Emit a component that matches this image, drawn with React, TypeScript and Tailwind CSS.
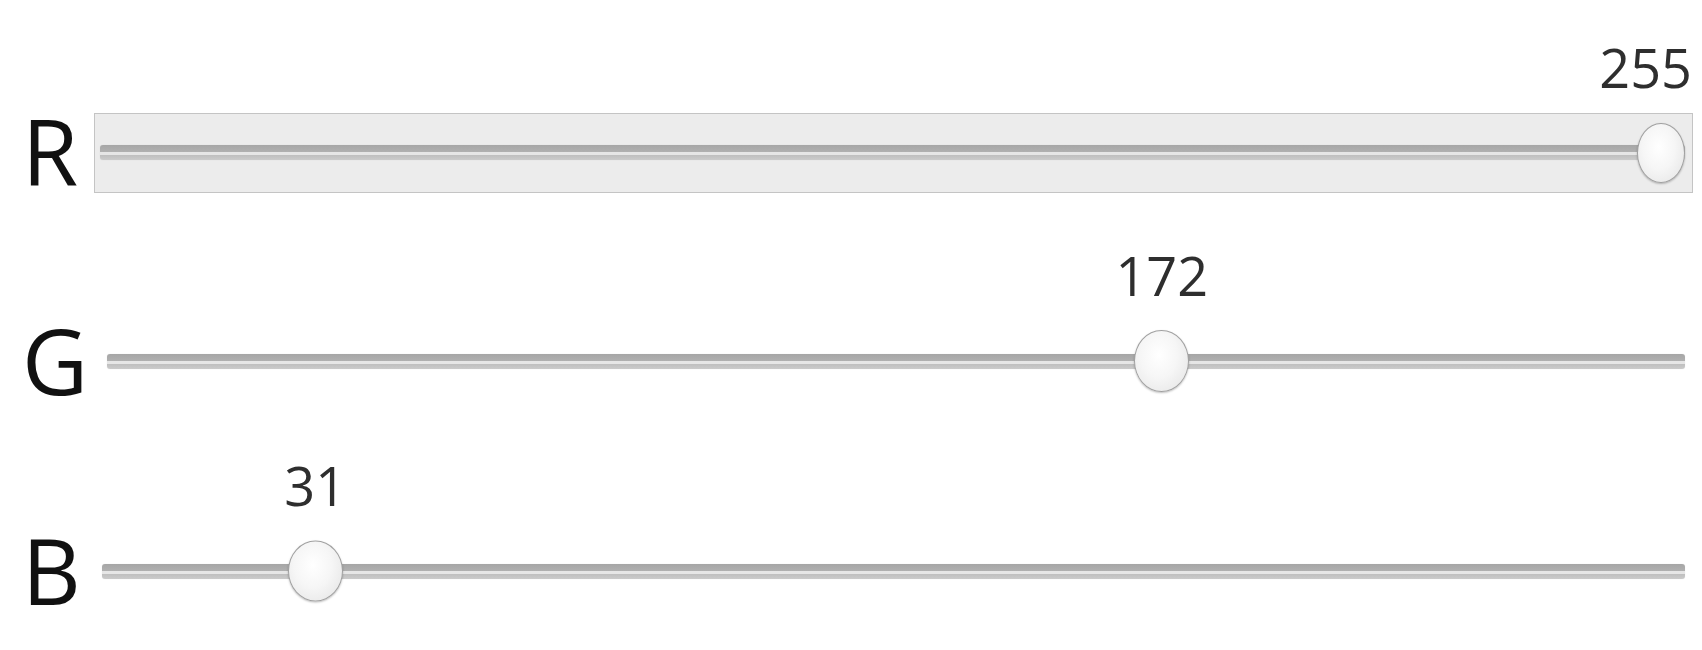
import React from "react";

type SliderProps = {
  value: number;
  thumbW: number;
  thumbClass: string;
  labelClass: string;
};

function Slider({ value, thumbW, thumbClass, labelClass }: SliderProps) {
  return (
    <div className="relative h-[15px] w-full rounded-[3px] bg-[linear-gradient(to_bottom,#a6a6a6_0%,#b0b0b0_45%,#e6e6e6_50%,#e6e6e6_64%,#c0c0c0_70%,#cbcbcb_100%)] shadow-[0_0_1px_rgba(0,0,0,0.15)]">
      <div
        className="absolute top-1/2 h-0"
        style={{ left: `calc((100% - ${thumbW}px) * ${value / 255})`, width: thumbW }}
      >
        <div
          className={`absolute left-0 top-0 -translate-y-1/2 rounded-[50%] border-[1.5px] border-[#a0a0a0] bg-[radial-gradient(ellipse_at_45%_40%,#ffffff_0%,#f6f6f6_45%,#e2e2e2_100%)] shadow-[0_1px_2px_rgba(0,0,0,0.25)] ${thumbClass}`}
        />
        <div
          className={`absolute bottom-[59px] whitespace-nowrap text-[54px] leading-none text-[#2e2e2e] ${labelClass}`}
        >
          {value}
        </div>
      </div>
    </div>
  );
}

function Letter({ children }: { children: React.ReactNode }) {
  return (
    <div className="mb-[2px] w-[94px] shrink-0 pl-[22px] text-[91px] leading-none text-[#111]">
      {children}
    </div>
  );
}

export default function App() {
  return (
    <div
      className="h-[650px] w-[1702px] overflow-hidden bg-white pt-[91px]"
      style={{ fontFamily: '"Open Sans", "Liberation Sans", sans-serif' }}
    >
      <div className="flex flex-col gap-[90px]">
        {/* R */}
        <div className="flex h-[120px] items-center">
          <Letter>R</Letter>
          <div className="mt-[4px] h-[80px] w-[1599px] border border-[#c4c4c4] bg-[#ececec] pl-[5px] pr-[7px] pt-[31px]">
            <Slider
              value={255}
              thumbW={48}
              thumbClass="w-[48px] h-[60px]"
              labelClass="right-[-7px]"
            />
          </div>
        </div>
        {/* G */}
        <div className="flex h-[120px] items-center">
          <Letter>G</Letter>
          <div className="w-[1599px] pl-[13px] pr-[8px]">
            <Slider
              value={172}
              thumbW={55}
              thumbClass="w-[55px] h-[62px]"
              labelClass="left-1/2 -translate-x-1/2"
            />
          </div>
        </div>
        {/* B */}
        <div className="flex h-[120px] items-center">
          <Letter>B</Letter>
          <div className="w-[1599px] pl-[8px] pr-[8px]">
            <Slider
              value={31}
              thumbW={55}
              thumbClass="w-[55px] h-[61px]"
              labelClass="left-1/2 -translate-x-1/2"
            />
          </div>
        </div>
      </div>
    </div>
  );
}
